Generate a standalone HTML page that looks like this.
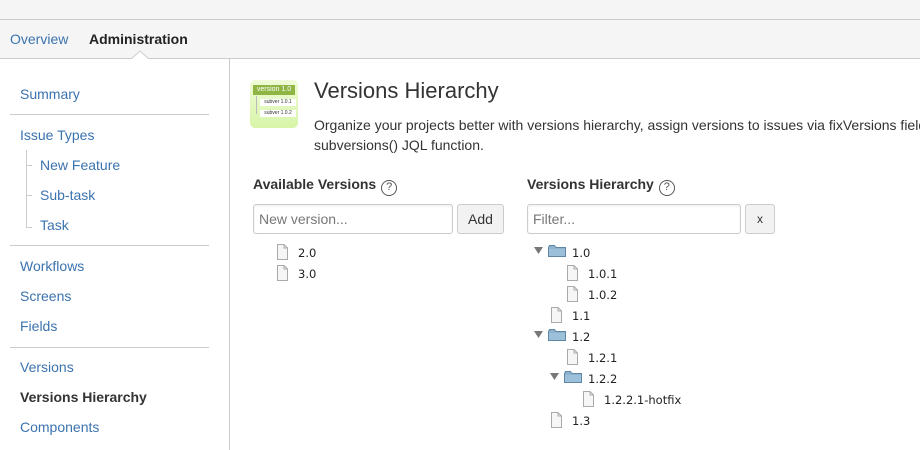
<!DOCTYPE html>
<html><head><style>
*{box-sizing:border-box;margin:0;padding:0}
html,body{width:920px;height:450px;overflow:hidden}
body{background:#fff;font-family:"Liberation Sans",Arial,sans-serif;font-size:14px;color:#333;position:relative}
.abs{position:absolute;white-space:nowrap}
.top{position:absolute;left:0;top:0;width:920px;height:20px;background:#f5f5f5;border-bottom:1px solid #ccc}
.nav{position:absolute;left:0;top:20px;width:920px;height:39px;background:#f5f5f5;border-bottom:1px solid #ccc}
.side{position:absolute;left:0;top:59px;width:230px;height:391px;border-right:1px solid #ccc}
.l{color:#3b73af;font-size:14px;line-height:16px}
.hr{position:absolute;left:10px;width:199px;height:1px;background:#ccc}
.tv{font-family:"DejaVu Sans",Verdana,sans-serif;font-size:11.5px;color:#222;line-height:14px}
.in{position:absolute;height:30px;border:1px solid #ccc;border-radius:3px;background:#fff;color:#777;font-size:14px;padding:6px 5px;box-shadow:inset 0 1px 2px rgba(0,0,0,.08)}
.btn{position:absolute;height:30px;border:1px solid #ccc;border-radius:3px;background:#f2f2f2;color:#333;font-size:14px;text-align:center;line-height:28px}
.q{display:inline-block;width:16px;height:16px;border:1.5px solid #555;border-radius:50%;font-size:11px;line-height:13px;text-align:center;font-weight:normal;color:#555;vertical-align:-2px;margin-left:5px;position:relative;top:-1px}
</style></head><body>
<div class="top"></div>
<div class="nav">
 <div class="abs" style="left:10px;top:11px;color:#3b73af">Overview</div>
 <div class="abs" style="left:89px;top:11px;font-weight:bold;color:#222">Administration</div>
</div>
<svg class="abs" style="left:131px;top:50px" width="18" height="10"><path d="M0 9 L9 1 L18 9" fill="#fff" stroke="#ccc"/><rect x="0" y="9" width="18" height="2" fill="#fff"/></svg>
<div class="side">
 <div class="abs l" style="left:20px;top:27px">Summary</div>
 <div class="hr" style="top:55px"></div>
 <div class="abs l" style="left:20px;top:68px">Issue Types</div>
 <div class="abs" style="left:26px;top:91px;width:1px;height:78px;background:#ccc"></div>
 <div class="abs" style="left:26px;top:106px;width:6px;height:1px;background:#ccc"></div>
 <div class="abs" style="left:26px;top:136px;width:6px;height:1px;background:#ccc"></div>
 <div class="abs" style="left:26px;top:168px;width:6px;height:1px;background:#ccc"></div>
 <div class="abs l" style="left:40px;top:98px">New Feature</div>
 <div class="abs l" style="left:40px;top:128px">Sub-task</div>
 <div class="abs l" style="left:40px;top:158px">Task</div>
 <div class="hr" style="top:186px"></div>
 <div class="abs l" style="left:20px;top:199px">Workflows</div>
 <div class="abs l" style="left:20px;top:229px">Screens</div>
 <div class="abs l" style="left:20px;top:259px">Fields</div>
 <div class="hr" style="top:288px"></div>
 <div class="abs l" style="left:20px;top:300px">Versions</div>
 <div class="abs l" style="left:20px;top:330px;color:#333;font-weight:bold">Versions Hierarchy</div>
 <div class="abs l" style="left:20px;top:360px">Components</div>
</div>
<!-- logo -->
<div class="abs" style="left:250px;top:80px;width:48px;height:48px;border-radius:5px;background:linear-gradient(#f0fbd8,#d8f5a8)"></div>
<div class="abs" style="left:253px;top:85px;width:42px;height:10px;background:#8fb544;color:#fff;font-size:7px;line-height:10px;text-align:center">version 1.0</div>
<div class="abs" style="left:256px;top:96px;width:1px;height:18px;background:#bbb"></div>
<div class="abs" style="left:260px;top:99px;width:36px;height:7px;background:#fff;font-size:5px;line-height:7px;text-align:center;color:#333">subver 1.0.1</div>
<div class="abs" style="left:260px;top:110px;width:36px;height:7px;background:#fff;font-size:5px;line-height:7px;text-align:center;color:#333">subver 1.0.2</div>
<div class="abs" style="left:314px;top:78px;font-size:22px;color:#333">Versions Hierarchy</div>
<div class="abs" style="left:314px;top:115px;width:606px;overflow:hidden;line-height:20px">Organize your projects better with versions hierarchy, assign versions to issues via fixVersions field and use<br>subversions() JQL function.</div>
<div class="abs" style="left:253px;top:176px;font-weight:bold;color:#333">Available Versions<span class="q">?</span></div>
<div class="in" style="left:253px;top:204px;width:200px">New version...</div>
<div class="btn" style="left:457px;top:204px;width:47px">Add</div>
<div class="abs" style="left:527px;top:176px;font-weight:bold;color:#333">Versions Hierarchy<span class="q">?</span></div>
<div class="in" style="left:527px;top:204px;width:214px">Filter...</div>
<div class="btn" style="left:745px;top:204px;width:30px;font-size:12px">x</div>
<svg width="0" height="0" style="position:absolute"><defs>
<g id="f"><path d="M1.5 .5H8L11.5 4V15.5H1.5Z" fill="#f6f6f6" stroke="#aaa"/><path d="M8 .5V4H11.5" fill="none" stroke="#aaa"/></g>
<g id="d"><path d="M.5 3.5V12.5H17.5V3.5H8L6.5 1.5H1.5Z" fill="#8fb3cf" stroke="#5f87a5"/><rect x="1" y="5" width="16" height="7" fill="#9cc0da"/></g>
<g id="t"><path d="M0 0H9L4.5 7Z" fill="#777"/></g>
</defs></svg>
<!-- available list -->
<svg class="abs" style="left:276px;top:244px" width="14" height="17"><use href="#f"/></svg><div class="abs tv" style="left:298px;top:246px">2.0</div>
<svg class="abs" style="left:276px;top:265px" width="14" height="17"><use href="#f"/></svg><div class="abs tv" style="left:298px;top:267px">3.0</div>
<!-- tree -->
<svg class="abs" style="left:534px;top:247px" width="10" height="8"><use href="#t"/></svg>
<svg class="abs" style="left:548px;top:244px" width="19" height="14"><use href="#d"/></svg><div class="abs tv" style="left:572px;top:246px">1.0</div>
<svg class="abs" style="left:566px;top:265px" width="14" height="17"><use href="#f"/></svg><div class="abs tv" style="left:588px;top:267px">1.0.1</div>
<svg class="abs" style="left:566px;top:286px" width="14" height="17"><use href="#f"/></svg><div class="abs tv" style="left:588px;top:288px">1.0.2</div>
<svg class="abs" style="left:550px;top:307px" width="14" height="17"><use href="#f"/></svg><div class="abs tv" style="left:572px;top:309px">1.1</div>
<svg class="abs" style="left:534px;top:331px" width="10" height="8"><use href="#t"/></svg>
<svg class="abs" style="left:548px;top:328px" width="19" height="14"><use href="#d"/></svg><div class="abs tv" style="left:572px;top:330px">1.2</div>
<svg class="abs" style="left:566px;top:349px" width="14" height="17"><use href="#f"/></svg><div class="abs tv" style="left:588px;top:351px">1.2.1</div>
<svg class="abs" style="left:550px;top:373px" width="10" height="8"><use href="#t"/></svg>
<svg class="abs" style="left:564px;top:370px" width="19" height="14"><use href="#d"/></svg><div class="abs tv" style="left:588px;top:372px">1.2.2</div>
<svg class="abs" style="left:582px;top:391px" width="14" height="17"><use href="#f"/></svg><div class="abs tv" style="left:604px;top:393px">1.2.2.1-hotfix</div>
<svg class="abs" style="left:550px;top:412px" width="14" height="17"><use href="#f"/></svg><div class="abs tv" style="left:572px;top:414px">1.3</div>
</body></html>
